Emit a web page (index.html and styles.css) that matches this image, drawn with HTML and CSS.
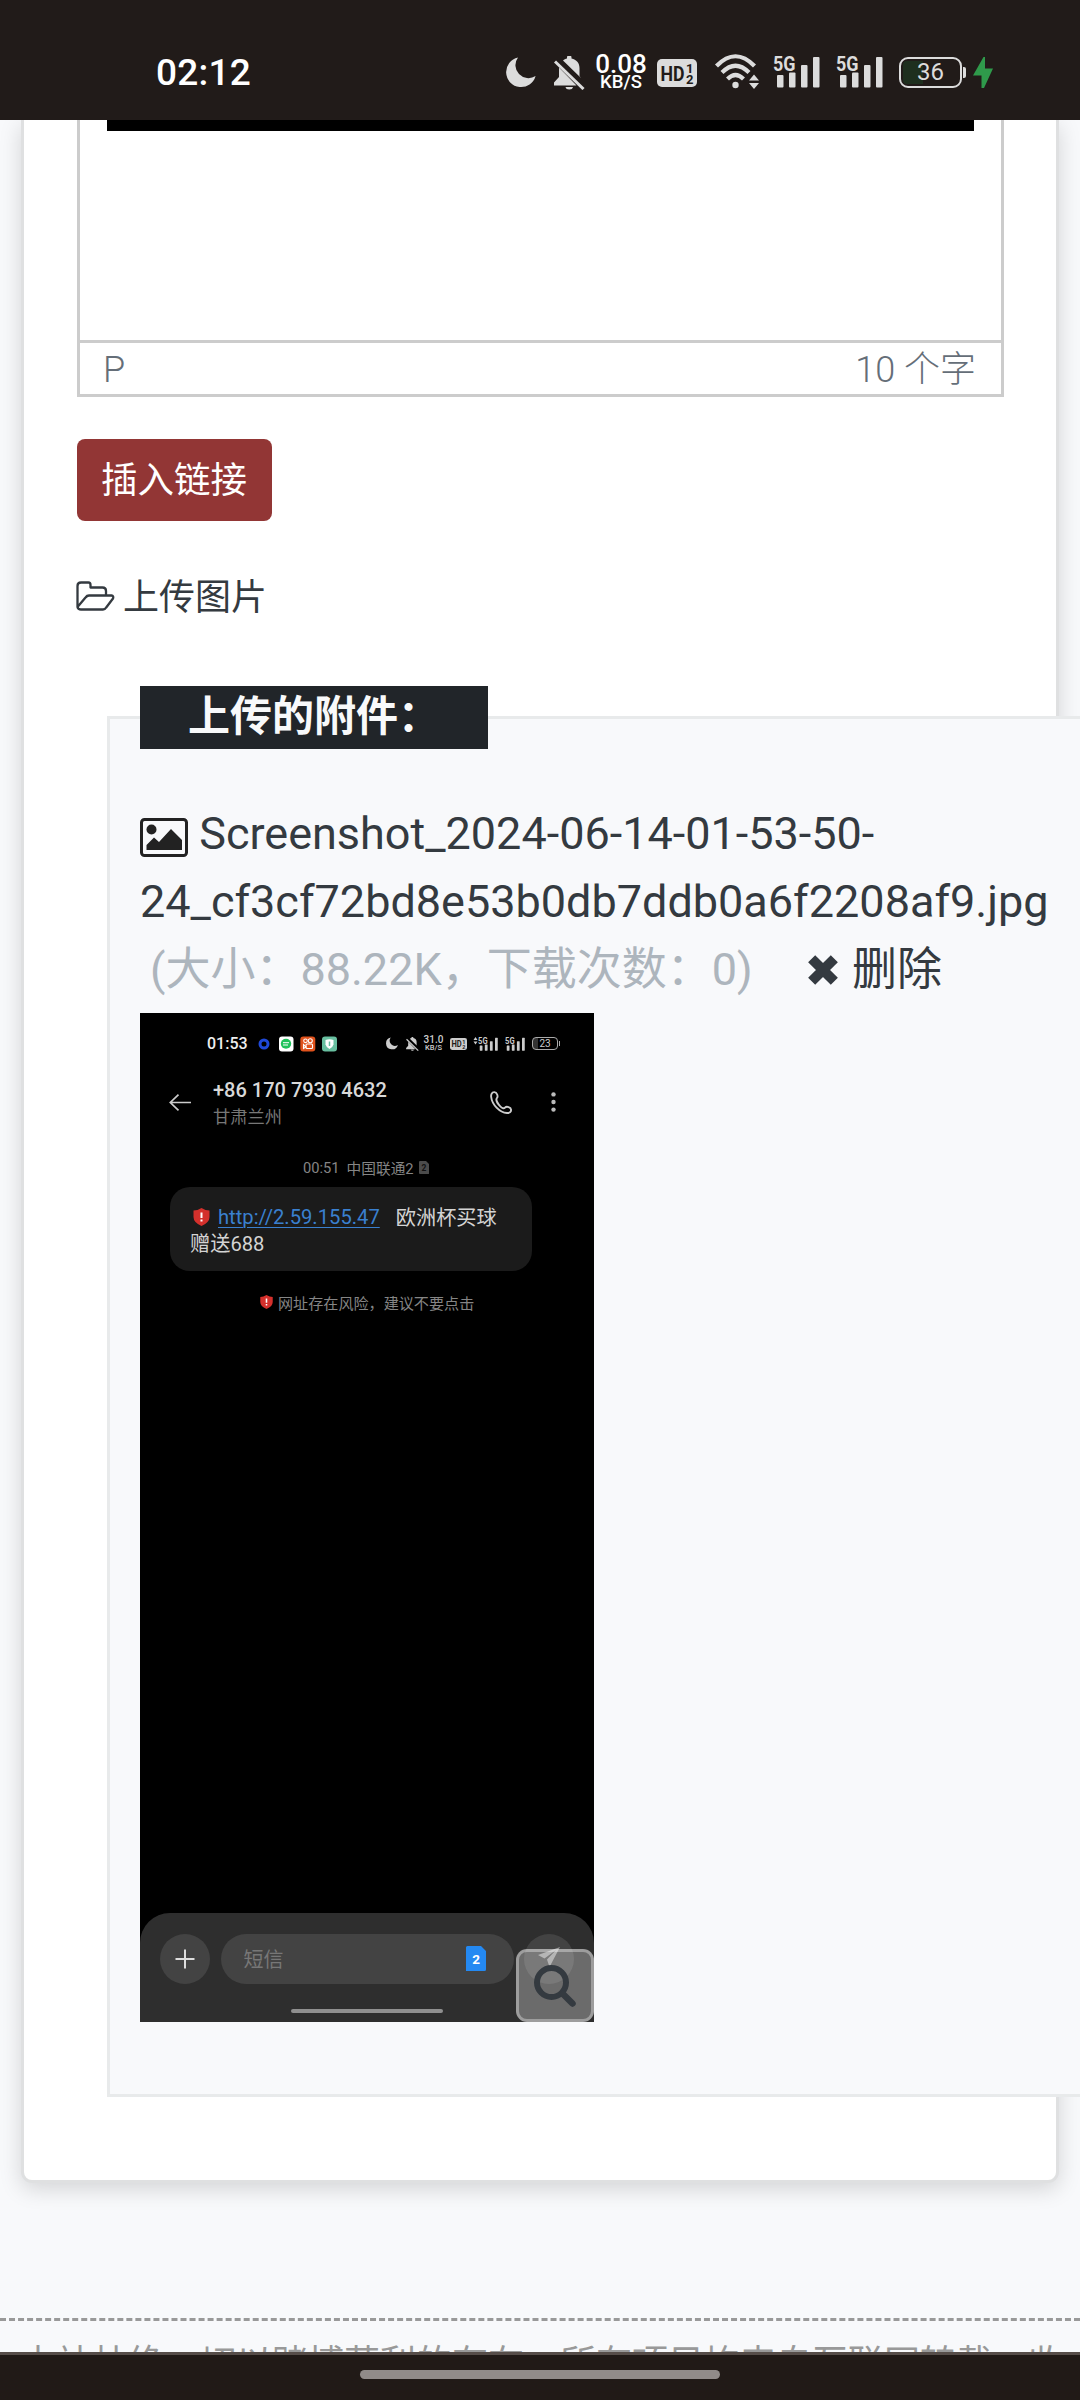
FILE: index.html
```html
<!DOCTYPE html>
<html lang="zh-CN">
<head>
<meta charset="utf-8">
<title>上传图片</title>
<link rel="stylesheet" href="styles.css">
</head>
<body>
<svg class="defs" width="0" height="0">
  <symbol id="moon" viewBox="0 0 30 31"><path d="M12 .4A15 15 0 1 0 29.6 19 A13 13 0 0 1 12 .4z"/></symbol>
  <symbol id="bell" viewBox="0 0 31 34"><path d="M9 4.500C10.300 3.300 11.500 2.800 13 2.500V1.500a2 2 0 0 1 4.500 0V2.500C22.500 3.500 25.500 7 25.500 12v8l1.500 2zM5 11.500 22.500 29.500H0V26.500L5 21zM11.500 31h7.500a3.800 3 0 0 1-7.500 0z"/><path d="M1 5.500 29.500 33" fill="none" stroke="currentColor" stroke-width="3"/></symbol>
  <symbol id="signal-bars" viewBox="0 0 47 33"><rect x="4" y="20" width="6.500" height="12.500" rx="1"/><rect x="16" y="17.500" width="6.500" height="15" rx="1"/><rect x="28" y="10" width="6.500" height="22.500" rx="1"/><rect x="40" y="2" width="6.500" height="30.500" rx="1"/></symbol>
  <symbol id="shield" viewBox="0 0 16 18"><path fill="#d4302c" d="M8 0Q12 2.500 16 2.500V9Q16 14.500 8 18Q0 14.500 0 9V2.500Q4 2.500 8 0z"/><path stroke="#fff" stroke-width="2" d="M8 4.500v5.500M8 11.500v2"/></symbol>
</svg>

<header class="status-bar">
  <span class="clock">02:12</span>
  <span class="status-icons">
    <svg class="i-moon"><use href="#moon"/></svg>
    <svg class="i-bell"><use href="#bell"/></svg>
    <span class="speed"><b>0.08</b><i>KB/S</i></span>
    <svg class="i-hd" viewBox="0 0 40 28"><rect width="40" height="28" rx="5"/><g class="badge-text"><text x="3.500" y="22" font-size="21" textLength="24" lengthAdjust="spacingAndGlyphs">HD</text><text x="29" y="13.500" font-size="13">1</text><text x="29" y="25" font-size="13">2</text></g></svg>
    <svg class="i-wifi" viewBox="0 0 44 35"><g fill="none" stroke="currentColor" stroke-width="4.200"><path d="M1.500 12Q20.500-7.500 39.500 12"/><path d="M7 18.500Q20.500 5 34 18.500"/><path d="M12.500 25Q20.500 17 28.500 25"/></g><circle cx="20.500" cy="31" r="3.200"/><path d="M39 20.500 44 26.500H34zM39 35 44 29H34z"/></svg>
    <svg class="i-signal" viewBox="0 0 47 33"><use href="#signal-bars"/><text x="0" y="15.500" font-size="21" textLength="22.500" lengthAdjust="spacingAndGlyphs">5G</text></svg>
    <svg class="i-signal" viewBox="0 0 47 33"><use href="#signal-bars"/><text x="0" y="15.500" font-size="21" textLength="22.500" lengthAdjust="spacingAndGlyphs">5G</text></svg>
    <span class="battery"><span>36</span></span>
    <svg class="i-bolt" viewBox="0 0 20 31"><path fill="#2f9a4b" d="M10.500 0 0 18.500H8.500V31H11L20 11.500H12V0z"/></svg>
  </span>
</header>

<main class="page">
  <section class="card">
    <div class="editor">
      <div class="editor-body"><div class="editor-image"></div></div>
      <div class="editor-status"><span>P</span><span>10 个字</span></div>
    </div>
    <button class="insert-link">插入链接</button>
    <a class="upload">
      <svg width="39" height="30" viewBox="0 0 39 30" fill="none" stroke="currentColor" stroke-width="2.300" stroke-linejoin="round"><path d="M1.500 26V5Q1.500 1.500 5 1.500h7.500Q14.500 1.500 14.500 4v2.500h12Q30 6.500 30 10v4.500M1.500 26Q2 28.500 5 28.500H27Q29 28.500 30.200 26.500L37 17.500Q38 14.800 35.500 14.500H13Q11 14.500 9.500 16.500z"/></svg>
      <span>上传图片</span>
    </a>
    <fieldset class="attachments">
      <legend>上传的附件：</legend>
      <div class="file-name"><svg class="file-icon" width="48" height="39" viewBox="0 0 48 39"><rect x="1.500" y="1.500" width="45" height="36" rx="3" fill="none" stroke="#222" stroke-width="3"/><circle cx="11.500" cy="11.500" r="5" fill="#222"/><path fill="#222" d="M6.500 32V27L14 19.500 19 24 31 11 42 22V32z"/></svg> Screenshot_2024-06-14-01-53-50-24_cf3cf72bd8e53b0db7ddb0a6f2208af9.jpg</div>
      <div class="file-meta">
        <span class="muted">(大小：88.22K，下载次数：0)</span>
        <a class="delete"><svg width="30" height="30" viewBox="0 0 30 30"><path stroke="currentColor" stroke-width="10" stroke-linecap="square" d="M7.200 7.200 22.800 22.800M22.800 7.200 7.200 22.800"/></svg>删除</a>
      </div>
      <div class="thumb">
        <div class="t-status">
          <span class="t-clock">01:53</span>
          <svg class="t-apps" width="80" height="16" viewBox="0 0 80 16"><circle cx="6" cy="8" r="4" fill="none" stroke="#1f49d8" stroke-width="3"/><rect x="21" y=".500" width="14.500" height="15" rx="3" fill="#fff"/><ellipse cx="28" cy="7.700" rx="5.200" ry="5" fill="#1fc25b"/><path stroke="#fff" d="M25 6.700h6M25 9h5"/><rect x="42.300" y=".500" width="15" height="15" rx="3" fill="#e0521c"/><g fill="none" stroke="#fff" stroke-width="1.100"><circle cx="47.500" cy="4.800" r="1.800"/><circle cx="52.300" cy="4.800" r="2"/><rect x="48" y="8" width="6.500" height="4.500" rx="1"/><path d="M45.500 8.500v4L48 11z"/></g><rect x="64" y=".500" width="15" height="15" rx="3" fill="#68bfa0"/><path fill="#fff" d="M67.500 4Q71.500 2.500 75.500 4V8.500Q75 11 71.500 13Q68 11 67.500 8.500z"/><path stroke="#68bfa0" stroke-width="1.500" d="M71.500 5.500v4.500"/></svg>
          <svg class="t-moon"><use href="#moon"/></svg>
          <svg class="t-bell"><use href="#bell"/></svg>
          <span class="t-speed"><b>31.0</b><i>KB/S</i></span>
          <svg class="t-hd" viewBox="0 0 40 28"><rect width="40" height="28" rx="5"/><g class="badge-text"><text x="3.500" y="22" font-size="21" textLength="24" lengthAdjust="spacingAndGlyphs">HD</text><text x="29" y="13.500" font-size="13">1</text><text x="29" y="25" font-size="13">2</text></g></svg>
          <svg class="t-updown" width="5" height="8" viewBox="0 0 5 8"><path d="M2.500 0 4.500 3H.500zM2.500 7.500 4.500 4.500H.500z"/></svg>
          <svg class="t-signal" viewBox="0 0 47 33"><use href="#signal-bars"/><text x="0" y="15.500" font-size="21" textLength="22.500" lengthAdjust="spacingAndGlyphs">5G</text></svg>
          <svg class="t-signal second" viewBox="0 0 47 33"><use href="#signal-bars"/><text x="0" y="15.500" font-size="21" textLength="22.500" lengthAdjust="spacingAndGlyphs">5G</text></svg>
          <span class="t-battery">23</span>
        </div>
        <div class="t-head">
          <svg class="t-back" width="22" height="17" viewBox="0 0 22 17" fill="none" stroke="#ccc" stroke-width="1.700"><path d="M22 8.500H1.500M9.500.700 1.300 8.500l8.200 7.800"/></svg>
          <div class="t-contact"><div class="t-number">+86 170 7930 4632</div><div class="t-place">甘肃兰州</div></div>
          <svg class="t-phone" width="22" height="23" viewBox="0 0 22 23" fill="none" stroke="#ccc" stroke-width="1.900" stroke-linejoin="round"><path d="M6.800 7.200C8.500 5.500 7 1 4.200 1.100 1.500 1.200.900 4 1.200 6 2 13.500 9.500 21.500 17 22c2.500.100 4.200-1 4.100-3.200-.200-2.700-4.500-3.800-6.100-2.200-1 1.100-2.500 1-4.500-1C8.200 13.200 5.500 9 6.800 7.200z"/></svg>
          <svg class="t-more" width="5" height="20" viewBox="0 0 5 20" fill="#bbb"><circle cx="2.500" cy="2.400" r="2.200"/><circle cx="2.500" cy="10" r="2.200"/><circle cx="2.500" cy="17.600" r="2.200"/></svg>
        </div>
        <div class="t-time"><span>00:51</span><span>中国联通2</span><svg width="10" height="13" viewBox="0 0 10 13"><path fill="#4b4b4b" d="M1 0h6l3 3v9.500a.5.5 0 0 1-.5.5H1a1 1 0 0 1-1-1V1a1 1 0 0 1 1-1z"/><text x="2.600" y="10" font-size="8.500" font-weight="700" fill="#111">2</text></svg></div>
        <div class="t-bubble">
          <div class="t-line"><svg width="17" height="18"><use href="#shield"/></svg><a>http://2.59.155.47</a><span>欧洲杯买球</span></div>
          <div class="t-line">赠送688</div>
        </div>
        <div class="t-warn"><svg width="13" height="14"><use href="#shield"/></svg><span>网址存在风险，建议不要点击</span></div>
        <div class="t-compose">
          <div class="t-row">
            <span class="t-circle"><svg width="20" height="20" viewBox="0 0 20 20"><path stroke="#ddd" stroke-width="2" d="M10 .500v19M.500 10h19"/></svg></span>
            <span class="t-input"><span>短信</span><svg width="20" height="25" viewBox="0 0 20 25"><path fill="#2489f2" d="M1.500 0H15l5 5V23.500A1.500 1.500 0 0 1 18.500 25H0V1.500A1.500 1.500 0 0 1 1.500 0z"/><text x="6.300" y="18" font-size="13.500" font-weight="700" fill="#fff">2</text></svg></span>
            <span class="t-circle"><svg class="t-send" width="22" height="20" viewBox="0 0 22 20"><path fill="#999" d="M22 0 11.500 20 9 12.500 18 3 6.500 11.500 0 8z"/></svg></span>
          </div>
          <span class="t-home"></span>
        </div>
        <span class="zoom"><svg width="42" height="42" viewBox="0 0 42 42" fill="none" stroke="#343a40" stroke-linecap="round"><circle cx="17.500" cy="17.500" r="14.500" stroke-width="6"/><path stroke-width="6.500" d="M29 29 38.500 38.500"/></svg></span>
      </div>
    </fieldset>
  </section>
  <footer class="notice">本站杜绝一切以赌博获利的存在，所有项目均来自互联网转载，收</footer>
</main>

<nav class="nav-bar"><span></span></nav>
</body>
</html>
```
FILE: styles.css
```css
* { box-sizing: border-box; }
body {
  margin: 0;
  width: 1080px;
  height: 2400px;
  overflow: hidden;
  display: flex;
  flex-direction: column;
  background: #f8f9fb;
  color: #343a40;
  font-family: Roboto, "Noto Sans CJK SC", sans-serif;
}
svg { display: block; flex: none; overflow: visible; }
.defs { position: absolute; }
b, i { font-style: normal; font-weight: 500; }

.status-bar {
  flex: none;
  height: 120px;
  padding: 25px 87px 0 156px;
  display: flex;
  align-items: center;
  justify-content: space-between;
  background: #211b19;
  color: #dcdcdc;
  fill: currentColor;
}
.clock { color: #fff; font-size: 37px; font-weight: 500; letter-spacing: .2px; }
.status-icons { display: flex; align-items: center; }
.i-moon { width: 30px; height: 31px; margin-right: 18px; }
.i-bell { width: 31px; height: 34px; margin-right: 10px; }
.speed {
  width: 52px;
  margin-right: 10px;
  display: flex;
  flex-direction: column;
  align-items: center;
  color: #fff;
}
.speed b { font-size: 26px; line-height: 20px; }
.speed i { font-size: 18.500px; line-height: 17px; }
.i-hd { width: 40px; height: 28px; margin-right: 18px; }
.badge-text { fill: #211b19; font-weight: 700; }
.i-wifi { width: 44px; height: 35px; margin: -2px 14px 0 0; }
.i-signal { width: 47px; height: 33px; margin: -3px 16px 0 0; font-weight: 700; }
.battery {
  position: relative;
  width: 63px;
  height: 31px;
  margin-right: 11px;
  border: 2.500px solid #dcdcdc;
  border-radius: 9px;
  padding: 2px;
}
.battery span {
  display: block;
  height: 100%;
  border-radius: 4px;
  background: linear-gradient(90deg, #1e2f1e 36%, transparent 36%);
  font-size: 24px;
  line-height: 23px;
  text-align: center;
}
.battery::after {
  content: "";
  position: absolute;
  right: -6px;
  top: 8px;
  width: 3px;
  height: 11px;
  background: #dcdcdc;
  border-radius: 0 2px 2px 0;
}
.i-bolt { width: 20px; height: 31px; }

.page { flex: 1; min-height: 0; overflow: hidden; }
.card {
  height: 2063px;
  margin: 0 21px;
  padding: 0 52px 0 53px;
  border: 3px solid #dfe0e1;
  border-top: 0;
  border-radius: 0 0 11px 11px;
  background: #fff;
  box-shadow: 0 6px 22px rgba(0, 0, 0, .15);
}
.editor { width: 927px; border: 3px solid #ccc; border-top: 0; }
.editor-body { height: 220px; padding: 0 27px; }
.editor-image { height: 11px; background: #000; }
.editor-status {
  height: 54px;
  padding: 3px 25px 0 23px;
  border-top: 3px solid #ccc;
  display: flex;
  align-items: center;
  justify-content: space-between;
  color: #656e78;
  font-size: 36px;
  font-weight: 300;
  line-height: 50px;
}
.insert-link {
  display: block;
  width: 195px;
  height: 82px;
  margin-top: 42px;
  padding: 2px 1px 0 0;
  border: 0;
  border-radius: 8px;
  background: #923635;
  color: #fff;
  font: 36.500px/80px Roboto, "Noto Sans CJK SC", sans-serif;
}
.upload {
  display: flex;
  align-items: center;
  gap: 8px;
  height: 54px;
  margin: 48px 0 0 -1px;
  font-size: 36px;
  line-height: 54px;
}
.upload span { padding-top: 4px; }
.attachments {
  width: 974px;
  height: 1411px;
  margin: 63px 0 0 30px;
  padding: 51px 30px 0;
  border: 3px solid #e8eaeb;
  background: #f8f9fb;
}
.attachments legend {
  height: 63px;
  padding: 0 48px;
  background: #212529;
  color: #f8f9fa;
  font-size: 42px;
  font-weight: 700;
  line-height: 62px;
}
.file-name, .file-meta { font-size: 45px; line-height: 67.500px; }
.file-name { width: 920px; }
.file-icon { display: inline-block; vertical-align: -8px; }
.file-meta { display: flex; align-items: center; padding: 1px 0 0 10px; }
.muted { color: #adb5bd; white-space: nowrap; }
.delete { display: flex; align-items: center; gap: 14px; margin-left: auto; margin-right: 118px; }

.thumb {
  position: relative;
  width: 454px;
  height: 1009px;
  margin-top: 9px;
  display: flex;
  flex-direction: column;
  background: #000;
  color: #ccc;
}
.t-status {
  height: 30px;
  margin-top: 16px;
  padding-left: 67px;
  display: flex;
  align-items: center;
  fill: currentColor;
}
.t-clock { width: 39px; margin-right: 12px; color: #eee; font-size: 16px; font-weight: 500; }
.t-apps { margin-right: 48px; }
.t-moon { width: 12px; height: 13px; margin-right: 8px; }
.t-bell { width: 13px; height: 14px; margin-right: 4px; }
.t-speed { width: 21px; margin-right: 6px; display: flex; flex-direction: column; align-items: center; }
.t-speed b { font-size: 10px; line-height: 8px; }
.t-speed i { font-size: 7.500px; line-height: 8px; }
.t-hd { width: 17px; height: 12px; margin-right: 6px; }
.t-updown { margin: -6px 0 0; }
.t-signal { width: 20px; height: 14px; font-weight: 700; }
.t-signal.second { margin: 0 7px; }
.t-battery {
  position: relative;
  width: 26px;
  height: 13px;
  border: 1px solid #aaa;
  border-radius: 4px;
  background: linear-gradient(90deg, #333 22%, transparent 22%);
  font-size: 10px;
  line-height: 12px;
  text-align: center;
}
.t-battery::after {
  content: "";
  position: absolute;
  right: -3px;
  top: 3px;
  width: 1px;
  height: 5px;
  background: #aaa;
}
.t-head { height: 62px; margin-top: 19px; padding-left: 29px; display: flex; }
.t-back { margin-top: 16px; margin-right: 22px; }
.t-contact { width: 180px; }
.t-number { font-size: 20px; font-weight: 500; line-height: 24px; white-space: nowrap; color: #d8d8d8; }
.t-place { font-size: 17.300px; line-height: 22px; margin-top: 4px; color: #777; }
.t-phone { margin: 13px 0 0 97px; }
.t-more { margin: 14px 0 0 39px; }
.t-time {
  height: 24px;
  margin-top: 16px;
  padding-left: 163px;
  display: flex;
  align-items: center;
  font-size: 14.700px;
  color: #858585;
  white-space: nowrap;
}
.t-time span + span { margin: 0 5px 0 7px; }
.t-bubble {
  width: 362px;
  height: 84px;
  margin: 7px 0 0 30px;
  padding: 17px 20px 0;
  border-radius: 20px;
  background: #1b1b1b;
  color: #d4d4d4;
}
.t-line { display: flex; align-items: center; height: 26px; font-size: 20.200px; white-space: nowrap; }
.t-line svg { margin: 0 8px 0 3px; }
.t-line a { color: #3a80cf; text-decoration: underline; text-underline-offset: 3px; text-decoration-thickness: 1px; }
.t-line a + span { margin-left: 16px; }
.t-warn {
  height: 24px;
  margin: 19px 0 0 120px;
  display: flex;
  align-items: center;
  gap: 5px;
  font-size: 15.100px;
  color: #858585;
  white-space: nowrap;
}
.t-compose {
  height: 109px;
  margin-top: auto;
  padding: 21px 20px 0;
  border-radius: 30px 30px 0 0;
  background: #2e2e2e;
}
.t-row { display: flex; justify-content: space-between; }
.t-circle {
  width: 50px;
  height: 50px;
  border-radius: 50%;
  background: #434343;
  display: flex;
  align-items: center;
  justify-content: center;
}
.t-input {
  width: 293px;
  height: 50px;
  padding: 0 28px 0 23px;
  border-radius: 25px;
  background: #434343;
  display: flex;
  align-items: center;
  justify-content: space-between;
  color: #777;
  font-size: 20px;
}
.t-send { margin-top: -4px; }
.t-home { display: block; width: 152px; height: 4px; margin: 25px auto 0; border-radius: 2px; background: #8f8f8f; }
.zoom {
  position: absolute;
  right: 0;
  bottom: 0;
  width: 78px;
  height: 73px;
  display: flex;
  align-items: center;
  justify-content: center;
  border: 3px solid rgba(255, 255, 255, .34);
  border-radius: 11px;
  background: rgba(248, 249, 250, .3);
}
.zoom svg { margin-top: 2px; }

.notice {
  margin-top: 135px;
  padding: 16px 0 0 20px;
  border-top: 3px dashed #999;
  color: #999;
  font-size: 36px;
  line-height: 54px;
  white-space: nowrap;
}
.nav-bar {
  flex: none;
  height: 48px;
  padding-top: 15px;
  border-top: 3px solid #564d49;
  background: #211a17;
}
.nav-bar span { display: block; width: 360px; height: 9px; margin: 0 auto; border-radius: 5px; background: #918b89; }
```
